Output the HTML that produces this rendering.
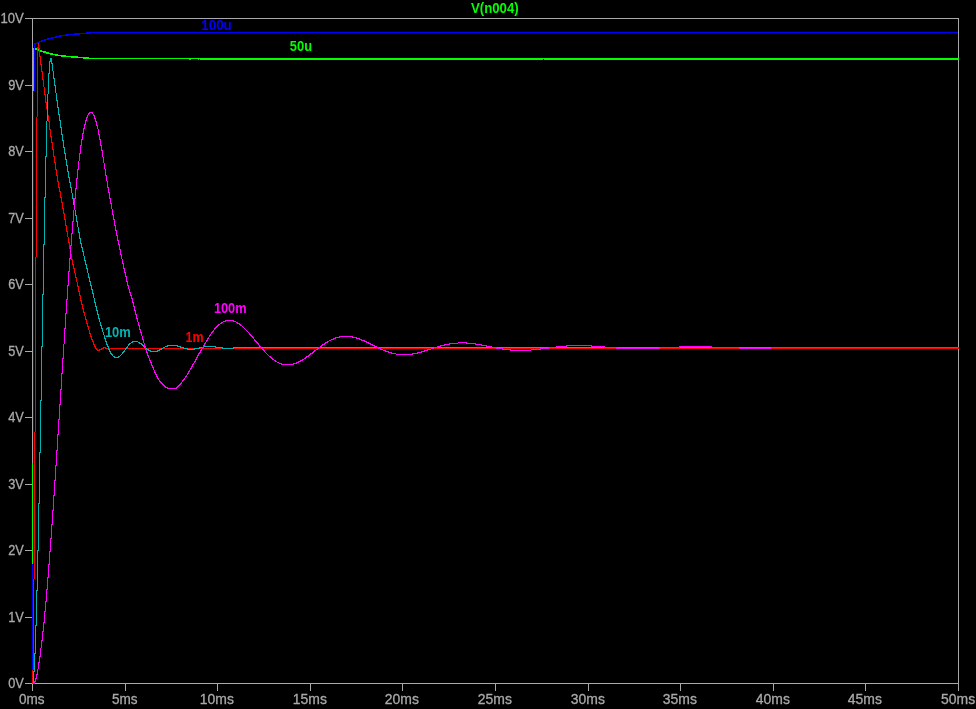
<!DOCTYPE html>
<html><head><meta charset="utf-8"><title>V(n004)</title>
<style>html,body{margin:0;padding:0;background:#000;overflow:hidden}svg{display:block}</style></head>
<body>
<svg width="976" height="709" viewBox="0 0 976 709" shape-rendering="crispEdges">
<defs><filter id="f" x="0" y="0" width="100%" height="100%" color-interpolation-filters="sRGB"><feOffset dx="0" dy="0"/></filter></defs>
<rect width="976" height="709" fill="#000"/>
<path d="M32 18.5H959M32 683.5H959M32.5 18V684M958.5 18V684M25 683.5H32M32.5 684V691M25 617.5H32M125.5 684V691M25 550.5H32M217.5 684V691M25 484.5H32M310.5 684V691M25 417.5H32M402.5 684V691M25 351.5H32M495.5 684V691M25 284.5H32M588.5 684V691M25 218.5H32M680.5 684V691M25 151.5H32M773.5 684V691M25 85.5H32M865.5 684V691M25 18.5H32M958.5 684V691" stroke="#a9a9a9" stroke-width="1" fill="none"/>
<path d="M32.5 463V684M33.5 48V463M34.5 48V50M35.5 48V50M36.5 48V50M37.5 49V51M38.5 49V51M39.5 49V51M40.5 50V52M41.5 50V52M43.5 51V53M44.5 51V53M45.5 51V53M46.5 52V54M47.5 52V54M48.5 52V54M50.5 53V55M51.5 53V55M52.5 53V55M55.5 54V56M56.5 54V56M57.5 54V56M61.5 55V57M62.5 55V57M63.5 55V57M64.5 55V57M65.5 55V57M71.5 56V58M72.5 56V58M73.5 56V58M74.5 56V58M75.5 56V58M76.5 56V58M77.5 56V58M83.5 57V59M84.5 57V59M85.5 57V59M86.5 57V59M87.5 57V59M88.5 57V59M189.5 58V60M190.5 58V60M198.5 58V60M200.5 58V60M201.5 58V60M202.5 58V60M203.5 58V60M204.5 58V60M205.5 58V60M206.5 58V60M207.5 58V60M208.5 58V60M209.5 58V60M210.5 58V60M211.5 58V60M212.5 58V60M213.5 58V60M214.5 58V60M215.5 58V60M216.5 58V60M217.5 58V60M218.5 58V60M219.5 58V60M220.5 58V60M221.5 58V60M222.5 58V60M223.5 58V60M224.5 58V60M225.5 58V60M226.5 58V60M227.5 58V60M228.5 58V60M229.5 58V60M230.5 58V60M231.5 58V60M232.5 58V60M233.5 58V60M234.5 58V60M235.5 58V60M236.5 58V60M237.5 58V60M238.5 58V60M239.5 58V60M240.5 58V60M241.5 58V60M242.5 58V60M243.5 58V60M244.5 58V60M245.5 58V60M246.5 58V60M247.5 58V60M248.5 58V60M249.5 58V60M250.5 58V60M251.5 58V60M252.5 58V60M253.5 58V60M254.5 58V60M255.5 58V60M256.5 58V60M257.5 58V60M258.5 58V60M259.5 58V60M260.5 58V60M261.5 58V60M262.5 58V60M263.5 58V60M264.5 58V60M265.5 58V60M266.5 58V60M267.5 58V60M268.5 58V60M269.5 58V60M270.5 58V60M271.5 58V60M272.5 58V60M273.5 58V60M274.5 58V60M275.5 58V60M276.5 58V60M277.5 58V60M278.5 58V60M279.5 58V60M280.5 58V60M281.5 58V60M282.5 58V60M283.5 58V60M284.5 58V60M285.5 58V60M286.5 58V60M287.5 58V60M288.5 58V60M289.5 58V60M290.5 58V60M291.5 58V60M292.5 58V60M293.5 58V60M294.5 58V60M295.5 58V60M296.5 58V60M297.5 58V60M298.5 58V60M299.5 58V60M300.5 58V60M301.5 58V60M302.5 58V60M303.5 58V60M304.5 58V60M305.5 58V60M306.5 58V60M307.5 58V60M308.5 58V60M309.5 58V60M310.5 58V60M311.5 58V60M312.5 58V60M313.5 58V60M314.5 58V60M315.5 58V60M316.5 58V60M317.5 58V60M318.5 58V60M319.5 58V60M320.5 58V60M321.5 58V60M322.5 58V60M323.5 58V60M324.5 58V60M325.5 58V60M326.5 58V60M327.5 58V60M328.5 58V60M329.5 58V60M330.5 58V60M331.5 58V60M332.5 58V60M333.5 58V60M334.5 58V60M335.5 58V60M336.5 58V60M337.5 58V60M338.5 58V60M339.5 58V60M340.5 58V60M341.5 58V60M342.5 58V60M343.5 58V60M344.5 58V60M345.5 58V60M346.5 58V60M347.5 58V60M348.5 58V60M349.5 58V60M350.5 58V60M351.5 58V60M352.5 58V60M353.5 58V60M354.5 58V60M355.5 58V60M356.5 58V60M357.5 58V60M358.5 58V60M359.5 58V60M360.5 58V60M361.5 58V60M362.5 58V60M363.5 58V60M364.5 58V60M365.5 58V60M366.5 58V60M367.5 58V60M368.5 58V60M369.5 58V60M370.5 58V60M371.5 58V60M372.5 58V60M373.5 58V60M374.5 58V60M375.5 58V60M376.5 58V60M377.5 58V60M378.5 58V60M379.5 58V60M380.5 58V60M381.5 58V60M382.5 58V60M383.5 58V60M384.5 58V60M385.5 58V60M386.5 58V60M387.5 58V60M388.5 58V60M389.5 58V60M390.5 58V60M391.5 58V60M392.5 58V60M393.5 58V60M394.5 58V60M395.5 58V60M396.5 58V60M397.5 58V60M398.5 58V60M399.5 58V60M400.5 58V60M401.5 58V60M402.5 58V60M403.5 58V60M404.5 58V60M405.5 58V60M406.5 58V60M407.5 58V60M408.5 58V60M409.5 58V60M410.5 58V60M411.5 58V60M412.5 58V60M413.5 58V60M414.5 58V60M415.5 58V60M416.5 58V60M417.5 58V60M418.5 58V60M419.5 58V60M420.5 58V60M421.5 58V60M422.5 58V60M423.5 58V60M424.5 58V60M425.5 58V60M426.5 58V60M427.5 58V60M428.5 58V60M429.5 58V60M430.5 58V60M431.5 58V60M432.5 58V60M433.5 58V60M434.5 58V60M435.5 58V60M436.5 58V60M437.5 58V60M438.5 58V60M439.5 58V60M440.5 58V60M441.5 58V60M442.5 58V60M443.5 58V60M444.5 58V60M445.5 58V60M446.5 58V60M447.5 58V60M448.5 58V60M449.5 58V60M450.5 58V60M451.5 58V60M452.5 58V60M453.5 58V60M454.5 58V60M455.5 58V60M456.5 58V60M457.5 58V60M458.5 58V60M459.5 58V60M460.5 58V60M461.5 58V60M462.5 58V60M463.5 58V60M464.5 58V60M465.5 58V60M466.5 58V60M467.5 58V60M468.5 58V60M469.5 58V60M470.5 58V60M471.5 58V60M472.5 58V60M473.5 58V60M474.5 58V60M475.5 58V60M476.5 58V60M477.5 58V60M478.5 58V60M479.5 58V60M480.5 58V60M481.5 58V60M482.5 58V60M483.5 58V60M484.5 58V60M485.5 58V60M486.5 58V60M487.5 58V60M488.5 58V60M489.5 58V60M490.5 58V60M491.5 58V60M492.5 58V60M493.5 58V60M494.5 58V60M495.5 58V60M496.5 58V60M497.5 58V60M498.5 58V60M499.5 58V60M500.5 58V60M501.5 58V60M502.5 58V60M503.5 58V60M504.5 58V60M505.5 58V60M506.5 58V60M507.5 58V60M508.5 58V60M509.5 58V60M510.5 58V60M511.5 58V60M512.5 58V60M513.5 58V60M514.5 58V60M515.5 58V60M516.5 58V60M517.5 58V60M518.5 58V60M519.5 58V60M520.5 58V60M521.5 58V60M522.5 58V60M523.5 58V60M524.5 58V60M525.5 58V60M526.5 58V60M527.5 58V60M528.5 58V60M529.5 58V60M530.5 58V60M531.5 58V60M532.5 58V60M533.5 58V60M534.5 58V60M535.5 58V60M536.5 58V60M537.5 58V60M538.5 58V60M539.5 58V60M540.5 58V60M541.5 58V60M542.5 58V60M544.5 58V60M545.5 58V60M546.5 58V60M547.5 58V60M548.5 58V60M549.5 58V60M550.5 58V60M551.5 58V60M552.5 58V60M553.5 58V60M554.5 58V60M555.5 58V60M556.5 58V60M557.5 58V60M558.5 58V60M559.5 58V60M560.5 58V60M561.5 58V60M562.5 58V60M563.5 58V60M564.5 58V60M565.5 58V60M566.5 58V60M567.5 58V60M568.5 58V60M569.5 58V60M570.5 58V60M571.5 58V60M572.5 58V60M573.5 58V60M574.5 58V60M575.5 58V60M576.5 58V60M577.5 58V60M578.5 58V60M579.5 58V60M580.5 58V60M581.5 58V60M582.5 58V60M583.5 58V60M584.5 58V60M585.5 58V60M586.5 58V60M587.5 58V60M588.5 58V60M589.5 58V60M590.5 58V60M591.5 58V60M592.5 58V60M593.5 58V60M594.5 58V60M595.5 58V60M596.5 58V60M597.5 58V60M598.5 58V60M599.5 58V60M600.5 58V60M601.5 58V60M602.5 58V60M603.5 58V60M604.5 58V60M605.5 58V60M606.5 58V60M607.5 58V60M608.5 58V60M609.5 58V60M610.5 58V60M611.5 58V60M612.5 58V60M613.5 58V60M614.5 58V60M615.5 58V60M616.5 58V60M617.5 58V60M618.5 58V60M619.5 58V60M620.5 58V60M621.5 58V60M622.5 58V60M623.5 58V60M624.5 58V60M625.5 58V60M626.5 58V60M627.5 58V60M628.5 58V60M629.5 58V60M630.5 58V60M631.5 58V60M632.5 58V60M633.5 58V60M634.5 58V60M635.5 58V60M636.5 58V60M637.5 58V60M638.5 58V60M639.5 58V60M640.5 58V60M641.5 58V60M642.5 58V60M643.5 58V60M644.5 58V60M645.5 58V60M646.5 58V60M647.5 58V60M648.5 58V60M649.5 58V60M650.5 58V60M651.5 58V60M652.5 58V60M653.5 58V60M654.5 58V60M655.5 58V60M656.5 58V60M657.5 58V60M658.5 58V60M659.5 58V60M660.5 58V60M661.5 58V60M662.5 58V60M663.5 58V60M664.5 58V60M665.5 58V60M666.5 58V60M667.5 58V60M668.5 58V60M669.5 58V60M670.5 58V60M671.5 58V60M672.5 58V60M673.5 58V60M674.5 58V60M675.5 58V60M676.5 58V60M677.5 58V60M678.5 58V60M679.5 58V60M680.5 58V60M681.5 58V60M682.5 58V60M683.5 58V60M684.5 58V60M685.5 58V60M686.5 58V60M687.5 58V60M688.5 58V60M689.5 58V60M690.5 58V60M691.5 58V60M692.5 58V60M693.5 58V60M694.5 58V60M695.5 58V60M696.5 58V60M697.5 58V60M698.5 58V60M699.5 58V60M700.5 58V60M701.5 58V60M702.5 58V60M703.5 58V60M704.5 58V60M705.5 58V60M706.5 58V60M707.5 58V60M708.5 58V60M709.5 58V60M710.5 58V60M711.5 58V60M712.5 58V60M713.5 58V60M714.5 58V60M715.5 58V60M716.5 58V60M717.5 58V60M718.5 58V60M719.5 58V60M720.5 58V60M721.5 58V60M722.5 58V60M723.5 58V60M724.5 58V60M725.5 58V60M726.5 58V60M727.5 58V60M728.5 58V60M729.5 58V60M730.5 58V60M731.5 58V60M732.5 58V60M733.5 58V60M734.5 58V60M735.5 58V60M736.5 58V60M737.5 58V60M738.5 58V60M739.5 58V60M740.5 58V60M741.5 58V60M742.5 58V60M743.5 58V60M744.5 58V60M745.5 58V60M746.5 58V60M747.5 58V60M748.5 58V60M749.5 58V60M750.5 58V60M751.5 58V60M752.5 58V60M753.5 58V60M754.5 58V60M755.5 58V60M756.5 58V60M757.5 58V60M758.5 58V60M759.5 58V60M760.5 58V60M761.5 58V60M762.5 58V60M763.5 58V60M764.5 58V60M765.5 58V60M766.5 58V60M767.5 58V60M768.5 58V60M769.5 58V60M770.5 58V60M771.5 58V60M772.5 58V60M773.5 58V60M774.5 58V60M775.5 58V60M776.5 58V60M777.5 58V60M778.5 58V60M779.5 58V60M780.5 58V60M781.5 58V60M782.5 58V60M783.5 58V60M784.5 58V60M785.5 58V60M786.5 58V60M787.5 58V60M788.5 58V60M789.5 58V60M790.5 58V60M791.5 58V60M792.5 58V60M793.5 58V60M794.5 58V60M795.5 58V60M796.5 58V60M797.5 58V60M798.5 58V60M799.5 58V60M800.5 58V60M801.5 58V60M802.5 58V60M803.5 58V60M804.5 58V60M805.5 58V60M806.5 58V60M807.5 58V60M808.5 58V60M809.5 58V60M810.5 58V60M811.5 58V60M812.5 58V60M813.5 58V60M814.5 58V60M815.5 58V60M816.5 58V60M817.5 58V60M818.5 58V60M819.5 58V60M820.5 58V60M821.5 58V60M822.5 58V60M823.5 58V60M824.5 58V60M825.5 58V60M826.5 58V60M827.5 58V60M828.5 58V60M829.5 58V60M830.5 58V60M831.5 58V60M832.5 58V60M833.5 58V60M834.5 58V60M835.5 58V60M836.5 58V60M837.5 58V60M838.5 58V60M839.5 58V60M840.5 58V60M841.5 58V60M842.5 58V60M843.5 58V60M844.5 58V60M845.5 58V60M846.5 58V60M847.5 58V60M848.5 58V60M849.5 58V60M850.5 58V60M851.5 58V60M852.5 58V60M853.5 58V60M854.5 58V60M855.5 58V60M856.5 58V60M857.5 58V60M858.5 58V60M859.5 58V60M860.5 58V60M861.5 58V60M862.5 58V60M863.5 58V60M864.5 58V60M865.5 58V60M866.5 58V60M867.5 58V60M868.5 58V60M869.5 58V60M870.5 58V60M871.5 58V60M872.5 58V60M873.5 58V60M874.5 58V60M875.5 58V60M876.5 58V60M877.5 58V60M878.5 58V60M879.5 58V60M880.5 58V60M881.5 58V60M882.5 58V60M883.5 58V60M884.5 58V60M885.5 58V60M886.5 58V60M887.5 58V60M888.5 58V60M889.5 58V60M890.5 58V60M891.5 58V60M892.5 58V60M893.5 58V60M894.5 58V60M895.5 58V60M896.5 58V60M897.5 58V60M898.5 58V60M899.5 58V60M900.5 58V60M901.5 58V60M902.5 58V60M903.5 58V60M904.5 58V60M905.5 58V60M906.5 58V60M907.5 58V60M908.5 58V60M909.5 58V60M910.5 58V60M911.5 58V60M912.5 58V60M913.5 58V60M914.5 58V60M915.5 58V60M916.5 58V60M917.5 58V60M918.5 58V60M919.5 58V60M920.5 58V60M921.5 58V60M922.5 58V60M923.5 58V60M924.5 58V60M925.5 58V60M926.5 58V60M927.5 58V60M928.5 58V60M929.5 58V60M930.5 58V60M931.5 58V60M932.5 58V60M933.5 58V60M934.5 58V60M935.5 58V60M936.5 58V60M937.5 58V60M938.5 58V60M939.5 58V60M940.5 58V60M941.5 58V60M942.5 58V60M943.5 58V60M944.5 58V60M945.5 58V60M946.5 58V60M947.5 58V60M948.5 58V60M949.5 58V60M950.5 58V60M951.5 58V60M952.5 58V60M953.5 58V60M954.5 58V60M955.5 58V60M956.5 58V60M957.5 58V60M958.5 58V60M42 51.5H43M49 53.5H50M53 54.5H55M58 55.5H61M66 56.5H71M78 57.5H83M89 58.5H189M191 58.5H198M199 58.5H200M543 58.5H544" stroke="#00ff00" stroke-width="1" fill="none"/>
<path d="M32.5 564V684M33.5 91V564M34.5 43V91M35.5 43V45M37.5 42V44M39.5 41V43M41.5 40V42M42.5 40V42M44.5 39V41M45.5 39V41M47.5 38V40M48.5 38V40M51.5 37V39M52.5 37V39M55.5 36V38M56.5 36V38M59.5 35V37M60.5 35V37M61.5 35V37M65.5 34V36M66.5 34V36M67.5 34V36M68.5 34V36M74.5 33V35M75.5 33V35M76.5 33V35M77.5 33V35M78.5 33V35M79.5 33V35M86.5 32V34M87.5 32V34M88.5 32V34M89.5 32V34M90.5 32V34M91 32.5H958M80 33.5H86M69 34.5H74M62 35.5H65M57 36.5H59M53 37.5H55M49 38.5H51M46 39.5H47M43 40.5H44M40 41.5H41M38 42.5H39M36 43.5H37" stroke="#0000ff" stroke-width="1" fill="none"/>
<path d="M32.5 670V684M33.5 579V670M34.5 432V579M35.5 257V432M36.5 117V257M37.5 47V117M38.5 43V49M39.5 48V57M40.5 56V65M41.5 64V72M42.5 71V80M43.5 79V87M44.5 87V95M45.5 94V103M46.5 102V109M47.5 108V115M48.5 115V122M49.5 121V130M50.5 129V137M51.5 136V143M52.5 142V150M53.5 149V157M54.5 156V163M55.5 162V170M56.5 169V176M57.5 175V182M58.5 181V188M59.5 187V192M60.5 191V198M61.5 197V203M62.5 202V209M63.5 208V214M64.5 213V220M65.5 219V226M66.5 225V232M67.5 231V237M68.5 237V243M69.5 242V249M70.5 248V254M71.5 254V260M72.5 259V265M73.5 264V269M74.5 268V273M75.5 273V278M76.5 277V282M77.5 282V287M78.5 286V292M79.5 291V296M80.5 295V301M81.5 300V305M82.5 304V309M83.5 308V313M84.5 312V316M85.5 316V320M86.5 319V324M87.5 323V327M88.5 326V330M89.5 330V334M90.5 333V337M91.5 336V340M92.5 339V342M93.5 341V345M94.5 344V347M95.5 346V349M96.5 348V350M97.5 349V351M99.5 349V351M101.5 348V350M103.5 347V349M105.5 347V349M104 347.5H105M102 348.5H103M106 348.5H959M100 349.5H101M98 350.5H99" stroke="#ff0000" stroke-width="1" fill="none"/>
<path d="M33.5 671V683M34.5 653V672M35.5 625V654M36.5 590V626M37.5 550V591M38.5 503V551M39.5 452V504M40.5 400V453M41.5 346V401M42.5 294V347M43.5 244V295M44.5 197V245M45.5 156V198M46.5 121V157M47.5 94V121M48.5 73V94M49.5 61V74M50.5 58V62M51.5 58V64M52.5 63V71M53.5 71V79M54.5 78V86M55.5 85V93M56.5 93V101M57.5 100V108M58.5 107V115M59.5 114V121M60.5 120V128M61.5 127V135M62.5 134V141M63.5 140V148M64.5 147V154M65.5 153V160M66.5 159V166M67.5 165V172M68.5 171V178M69.5 177V183M70.5 182V188M71.5 187V193M72.5 193V199M73.5 198V205M74.5 204V210M75.5 210V216M76.5 215V222M77.5 221V227M78.5 227V233M79.5 232V239M80.5 238V244M81.5 243V248M82.5 247V252M83.5 251V256M84.5 256V261M85.5 260V265M86.5 264V269M87.5 268V273M88.5 273V278M89.5 277V282M90.5 281V286M91.5 285V290M92.5 289V294M93.5 293V298M94.5 298V303M95.5 302V307M96.5 306V311M97.5 310V315M98.5 314V319M99.5 318V322M100.5 322V326M101.5 325V329M102.5 328V332M103.5 332V335M104.5 335V339M105.5 338V342M106.5 341V345M107.5 344V347M108.5 346V350M109.5 349V352M110.5 351V354M111.5 353V355M112.5 354V356M114.5 356V358M118.5 356V358M122.5 352V354M123.5 351V353M124.5 350V352M125.5 348V350M126.5 347V349M127.5 346V348M128.5 344V346M129.5 343V345M132.5 341V343M139.5 342V344M141.5 343V345M142.5 344V346M143.5 345V347M144.5 346V348M145.5 347V349M148.5 349V351M150.5 350V352M157.5 350V352M159.5 349V351M161.5 348V350M167.5 345V347M177.5 345V347M180.5 346V348M183.5 347V349M187.5 348V350M194.5 348V350M199.5 347V349M215.5 346V348M222.5 347V349M233.5 347V349M133 341.5H138M131 342.5H132M138 342.5H139M130 343.5H131M140 343.5H141M168 345.5H177M165 346.5H167M178 346.5H180M204 346.5H215M163 347.5H165M181 347.5H183M200 347.5H204M216 347.5H222M234 347.5H959M146 348.5H147M162 348.5H163M184 348.5H187M195 348.5H199M223 348.5H233M147 349.5H148M160 349.5H161M188 349.5H194M149 350.5H150M158 350.5H159M151 351.5H157M121 354.5H122M120 355.5H121M113 356.5H114M119 356.5H120M115 357.5H118" stroke="#00b4b4" stroke-width="1" fill="none"/>
<path d="M34.5 681V684M35.5 678V682M36.5 674V679M37.5 669V675M38.5 662V669M39.5 656V663M40.5 648V657M41.5 640V648M42.5 631V641M43.5 622V632M44.5 611V623M45.5 601V612M46.5 589V602M47.5 577V590M48.5 564V578M49.5 551V565M50.5 538V552M51.5 524V539M52.5 510V525M53.5 495V511M54.5 480V496M55.5 465V481M56.5 450V466M57.5 434V451M58.5 419V435M59.5 404V420M60.5 389V405M61.5 373V390M62.5 358V374M63.5 344V359M64.5 328V344M65.5 313V329M66.5 299V314M67.5 285V300M68.5 271V286M69.5 258V272M70.5 245V259M71.5 233V246M72.5 221V234M73.5 210V222M74.5 198V210M75.5 188V199M76.5 178V189M77.5 169V179M78.5 161V170M79.5 153V161M80.5 145V154M81.5 139V146M82.5 133V140M83.5 128V134M84.5 124V129M85.5 120V125M86.5 117V121M87.5 115V118M88.5 113V115M89.5 112V114M92.5 112V114M93.5 114V116M94.5 115V119M95.5 118V122M96.5 121V126M97.5 125V129M98.5 129V135M99.5 134V140M100.5 139V146M101.5 145V151M102.5 150V157M103.5 157V163M104.5 163V169M105.5 169V176M106.5 175V181M107.5 181V188M108.5 187V193M109.5 192V199M110.5 198V204M111.5 203V209M112.5 209V215M113.5 214V220M114.5 219V226M115.5 225V231M116.5 230V236M117.5 235V241M118.5 240V245M119.5 244V250M120.5 249V255M121.5 254V259M122.5 259V264M123.5 263V269M124.5 268V273M125.5 272V277M126.5 276V282M127.5 281V286M128.5 285V289M129.5 289V293M130.5 292V296M131.5 295V299M132.5 298V303M133.5 302V307M134.5 306V311M135.5 310V315M136.5 314V319M137.5 318V322M138.5 322V326M139.5 325V330M140.5 329V333M141.5 332V336M142.5 336V340M143.5 339V343M144.5 343V347M145.5 346V350M146.5 349V353M147.5 352V356M148.5 355V358M149.5 358V361M150.5 360V363M151.5 362V366M152.5 365V368M153.5 367V370M154.5 370V373M155.5 372V375M156.5 374V377M157.5 376V379M158.5 378V380M159.5 380V382M160.5 381V383M161.5 382V384M162.5 383V385M163.5 384V386M164.5 385V387M165.5 386V388M167.5 387V389M176.5 387V389M177.5 386V388M178.5 385V387M179.5 384V386M180.5 383V385M181.5 382V384M182.5 380V382M183.5 379V381M184.5 378V380M185.5 376V378M186.5 375V377M187.5 373V375M188.5 371V374M189.5 370V372M190.5 368V370M191.5 366V369M192.5 364V367M193.5 363V365M194.5 361V363M195.5 359V362M196.5 357V360M197.5 355V358M198.5 353V356M199.5 352V354M200.5 350V353M201.5 349V351M202.5 347V349M203.5 345V348M204.5 343V346M205.5 342V344M206.5 340V342M207.5 338V341M208.5 337V339M209.5 335V337M210.5 334V336M211.5 332V334M212.5 331V333M213.5 330V332M214.5 328V330M215.5 327V329M216.5 326V328M217.5 325V327M218.5 324V326M221.5 322V324M225.5 320V322M233.5 320V322M237.5 322V324M239.5 323V325M240.5 324V326M249.5 333V335M250.5 334V336M251.5 335V337M252.5 336V338M253.5 337V339M254.5 339V341M255.5 340V342M256.5 341V343M257.5 342V344M258.5 343V345M259.5 345V347M260.5 346V348M261.5 347V349M262.5 348V350M263.5 349V351M264.5 350V352M270.5 356V358M271.5 357V359M272.5 358V360M275.5 360V362M281.5 363V365M293.5 363V365M296.5 362V364M298.5 361V363M300.5 360V362M302.5 359V361M305.5 357V359M306.5 356V358M308.5 355V357M309.5 354V356M310.5 353V355M312.5 352V354M313.5 351V353M314.5 350V352M317.5 348V350M318.5 347V349M321.5 345V347M322.5 344V346M324.5 343V345M325.5 342V344M327.5 341V343M333.5 338V340M335.5 337V339M339.5 336V338M352.5 336V338M356.5 337V339M359.5 338V340M361.5 339V341M364.5 340V342M366.5 341V343M368.5 342V344M370.5 343V345M372.5 344V346M374.5 345V347M376.5 346V348M378.5 347V349M380.5 348V350M385.5 350V352M388.5 351V353M391.5 352V354M412.5 353V355M417.5 352V354M421.5 351V353M424.5 350V352M427.5 349V351M437.5 346V348M440.5 345V347M444.5 344V346M449.5 343V345M466.5 342V344M475.5 343V345M481.5 344V346M486.5 345V347M491.5 346V348M496.5 347V349M502.5 348V350M510.5 349V351M540.5 348V350M548.5 347V349M556.5 346V348M566.5 345V347M591.5 345V347M604.5 346V348M616.5 347V349M659.5 347V349M679.5 346V348M711.5 346V348M90 112.5H92M226 320.5H233M223 321.5H225M234 321.5H236M222 322.5H223M236 322.5H237M220 323.5H221M238 323.5H239M219 324.5H220M241 325.5H242M242 326.5H243M243 327.5H244M244 328.5H245M245 329.5H246M246 330.5H247M247 331.5H248M248 332.5H249M340 336.5H352M336 337.5H339M353 337.5H356M334 338.5H335M357 338.5H359M331 339.5H333M360 339.5H361M329 340.5H331M362 340.5H364M328 341.5H329M365 341.5H366M326 342.5H327M367 342.5H368M458 342.5H466M369 343.5H370M450 343.5H458M467 343.5H475M323 344.5H324M371 344.5H372M445 344.5H449M476 344.5H481M373 345.5H374M441 345.5H444M482 345.5H486M567 345.5H591M320 346.5H321M375 346.5H376M438 346.5H440M487 346.5H491M557 346.5H566M592 346.5H604M680 346.5H711M319 347.5H320M377 347.5H378M434 347.5H437M492 347.5H496M549 347.5H556M605 347.5H616M660 347.5H679M712 347.5H739M771 347.5H959M379 348.5H380M431 348.5H434M497 348.5H502M541 348.5H548M617 348.5H659M739 348.5H771M316 349.5H317M381 349.5H383M428 349.5H431M503 349.5H510M531 349.5H540M315 350.5H316M383 350.5H385M425 350.5H427M511 350.5H531M386 351.5H388M422 351.5H424M265 352.5H266M389 352.5H391M418 352.5H421M266 353.5H267M311 353.5H312M392 353.5H396M413 353.5H417M267 354.5H268M396 354.5H412M268 355.5H269M269 356.5H270M307 356.5H308M304 358.5H305M273 359.5H274M303 359.5H304M274 360.5H275M301 360.5H302M276 361.5H277M299 361.5H300M277 362.5H279M297 362.5H298M279 363.5H281M294 363.5H296M282 364.5H293M166 387.5H167M168 388.5H176M32 683.5H34" stroke="#ff00ff" stroke-width="1" fill="none"/>
<g font-family="'Liberation Sans', Arial, sans-serif" font-size="14" fill="#a9a9a9" stroke="#a9a9a9" stroke-width="0.3" filter="url(#f)">
<text x="8.2" y="688.2" textLength="15.6" lengthAdjust="spacingAndGlyphs">0V</text>
<text x="8.2" y="622.2" textLength="15.6" lengthAdjust="spacingAndGlyphs">1V</text>
<text x="8.2" y="555.2" textLength="15.6" lengthAdjust="spacingAndGlyphs">2V</text>
<text x="8.2" y="489.2" textLength="15.6" lengthAdjust="spacingAndGlyphs">3V</text>
<text x="8.2" y="422.2" textLength="15.6" lengthAdjust="spacingAndGlyphs">4V</text>
<text x="8.2" y="356.2" textLength="15.6" lengthAdjust="spacingAndGlyphs">5V</text>
<text x="8.2" y="289.2" textLength="15.6" lengthAdjust="spacingAndGlyphs">6V</text>
<text x="8.2" y="223.2" textLength="15.6" lengthAdjust="spacingAndGlyphs">7V</text>
<text x="8.2" y="156.2" textLength="15.6" lengthAdjust="spacingAndGlyphs">8V</text>
<text x="8.2" y="90.2" textLength="15.6" lengthAdjust="spacingAndGlyphs">9V</text>
<text x="0.5" y="23.2" textLength="23.3" lengthAdjust="spacingAndGlyphs">10V</text>
<text x="19.0" y="703.7" textLength="25.6" lengthAdjust="spacingAndGlyphs">0ms</text>
<text x="112.0" y="703.7" textLength="25.6" lengthAdjust="spacingAndGlyphs">5ms</text>
<text x="199.8" y="703.7" textLength="34.1" lengthAdjust="spacingAndGlyphs">10ms</text>
<text x="292.8" y="703.7" textLength="34.1" lengthAdjust="spacingAndGlyphs">15ms</text>
<text x="384.8" y="703.7" textLength="34.1" lengthAdjust="spacingAndGlyphs">20ms</text>
<text x="477.8" y="703.7" textLength="34.1" lengthAdjust="spacingAndGlyphs">25ms</text>
<text x="570.8" y="703.7" textLength="34.1" lengthAdjust="spacingAndGlyphs">30ms</text>
<text x="662.8" y="703.7" textLength="34.1" lengthAdjust="spacingAndGlyphs">35ms</text>
<text x="755.8" y="703.7" textLength="34.1" lengthAdjust="spacingAndGlyphs">40ms</text>
<text x="847.8" y="703.7" textLength="34.1" lengthAdjust="spacingAndGlyphs">45ms</text>
<text x="941.0" y="703.7" textLength="34.1" lengthAdjust="spacingAndGlyphs">50ms</text>
</g>
<g font-family="'Liberation Sans', Arial, sans-serif" font-size="14" font-weight="bold" filter="url(#f)">
<text x="471" y="13.3" textLength="47.7" lengthAdjust="spacingAndGlyphs" fill="#00ff00">V(n004)</text>
<text x="201.3" y="30" textLength="30.4" lengthAdjust="spacingAndGlyphs" fill="#0000ff">100u</text>
<text x="289.8" y="51" textLength="22.2" lengthAdjust="spacingAndGlyphs" fill="#00ff00">50u</text>
<text x="104.9" y="337.2" textLength="25.9" lengthAdjust="spacingAndGlyphs" fill="#00b4b4">10m</text>
<text x="185.6" y="342" textLength="18.1" lengthAdjust="spacingAndGlyphs" fill="#ff0000">1m</text>
<text x="213.9" y="313.2" textLength="32.7" lengthAdjust="spacingAndGlyphs" fill="#ff00ff">100m</text>
</g>
</svg>
</body></html>
